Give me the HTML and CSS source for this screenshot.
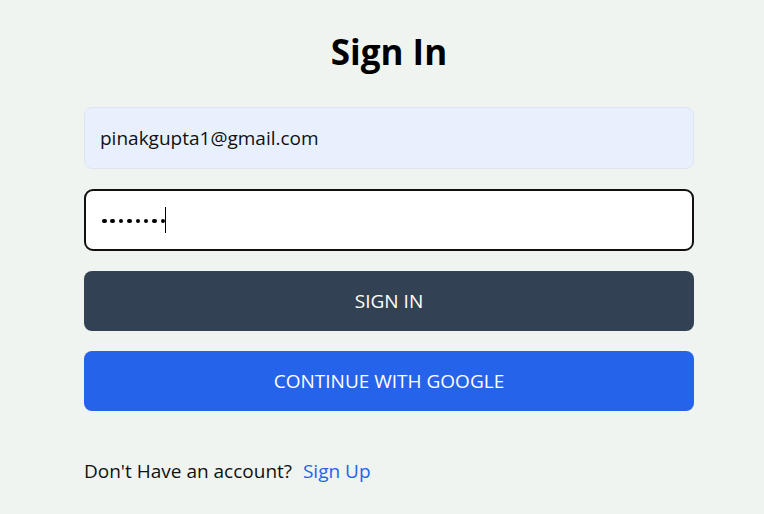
FILE: index.html
```html
<!DOCTYPE html>
<html>
<head>
<meta charset="utf-8">
<link rel="stylesheet" href="styles.css">
</head>
<body>
<main class="page">
  <h1 class="title">Sign In</h1>
  <form class="form">
    <input class="field field-email" type="email" value="pinakgupta1@gmail.com">
    <div class="field field-password" aria-label="password">
      <span class="dots"><i></i><i></i><i></i><i></i><i></i><i></i><i></i><i></i></span><span class="caret"></span>
    </div>
    <button type="button" class="btn btn-dark">SIGN IN</button>
    <button type="button" class="btn btn-blue">CONTINUE WITH GOOGLE</button>
  </form>
  <p class="footer">Don't Have an account? <a class="link" href="#">Sign Up</a></p>
</main>
</body>
</html>
```
FILE: styles.css
```css
html, body {
  margin: 0;
  padding: 0;
  background: #f0f4f1;
  font-family: "Open Sans", "Noto Sans", sans-serif;
  color: #111;
}
.page {
  width: 610px;
  margin: 0 0 0 84px;
  padding-top: 24px;
  display: flex;
  flex-direction: column;
}
.title {
  margin: 0;
  text-align: center;
  font-size: 35px;
  font-weight: 700;
  line-height: 56px;
  color: #000;
}
.form {
  margin-top: 27px;
  display: flex;
  flex-direction: column;
  gap: 20px;
}
.field {
  box-sizing: border-box;
  height: 62px;
  width: 100%;
  border-radius: 8px;
  font-family: inherit;
  font-size: 19px;
  padding: 0 15px;
  color: #111;
}
.field-email {
  background: #e8f0fe;
  border: 1px solid #dde6ef;
  outline: none;
}
.field-password {
  background: #fff;
  border: 2px solid #111;
  border-radius: 9px;
  display: flex;
  align-items: center;
  padding-left: 16px;
}
.dots {
  display: flex;
  gap: 3.9px;
  margin-top: 2px;
}
.dots i {
  display: block;
  width: 4.5px;
  height: 4.5px;
  border-radius: 50%;
  background: #000;
}
.caret {
  width: 1px;
  height: 26px;
  background: #000;
}
.btn {
  height: 60px;
  border: none;
  border-radius: 8px;
  color: #fff;
  font-family: inherit;
  font-size: 19px;
  cursor: pointer;
}
.btn-dark { background: #334155; }
.btn-blue { background: #2563eb; }
.footer {
  margin: 47px 0 0;
  font-size: 19px;
  color: #111;
}
.link {
  color: #2563eb;
  text-decoration: none;
  margin-left: 6px;
}
```
